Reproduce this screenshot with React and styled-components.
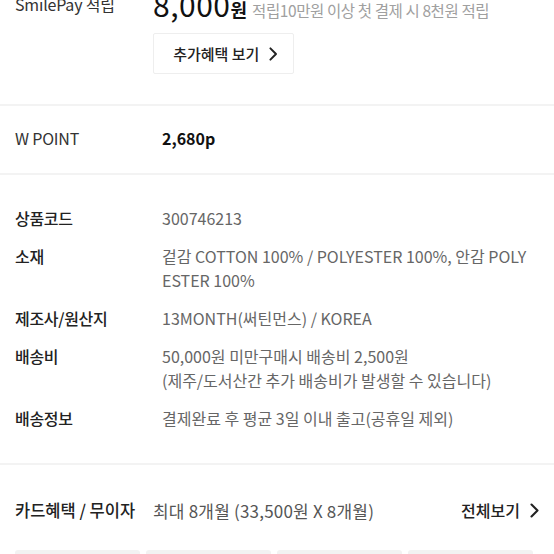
import styled, { createGlobalStyle } from 'styled-components'

const GlobalStyle = createGlobalStyle`
  html, body {
    margin: 0;
    padding: 0;
    background: #fff;
    overflow: hidden;
  }
  body {
    font-family: "Noto Sans CJK KR", "Noto Sans", sans-serif;
    color: #222;
    -webkit-font-smoothing: antialiased;
  }
  * {
    box-sizing: border-box;
  }
`

const infoRows = [
  { label: '상품코드', lines: ['300746213'] },
  { label: '소재', lines: ['겉감 COTTON 100% / POLYESTER 100%, 안감 POLY', 'ESTER 100%'] },
  { label: '제조사/원산지', lines: ['13MONTH(써틴먼스) / KOREA'] },
  { label: '배송비', lines: ['50,000원 미만구매시 배송비 2,500원', '(제주/도서산간 추가 배송비가 발생할 수 있습니다)'] },
  { label: '배송정보', lines: ['결제완료 후 평균 3일 이내 출고(공휴일 제외)'] }
]

function Chevron({ size = 14 }) {
  return (
    <svg width={size * 0.6} height={size} viewBox="0 0 6 10" fill="none">
      <path d="M1 1l4 4-4 4" stroke="#222" strokeWidth="1.4" strokeLinecap="round" strokeLinejoin="round" />
    </svg>
  )
}

function App() {
  return (
    <Page>
      <GlobalStyle />

      <Benefit>
        <Row>
          <Label>SmilePay 적립</Label>
          <Amount>
            <strong>8,000</strong><b>원</b>
            <span>적립10만원 이상 첫 결제 시 8천원 적립</span>
          </Amount>
        </Row>
        <MoreButton>
          추가혜택 보기
          <Chevron size={14} />
        </MoreButton>
      </Benefit>

      <Divider />

      <PointSection>
        <Label>W POINT</Label>
        <PointValue>2,680p</PointValue>
      </PointSection>

      <Divider />

      <InfoSection>
        {infoRows.map((row) => (
          <InfoRow key={row.label}>
            <InfoLabel>{row.label}</InfoLabel>
            <InfoValue>
              {row.lines.map((line) => <div key={line}>{line}</div>)}
            </InfoValue>
          </InfoRow>
        ))}
      </InfoSection>

      <Divider />

      <CardSection>
        <CardHeader>
          <CardLabel>카드혜택 / 무이자</CardLabel>
          <CardValue>최대 8개월 (33,500원 X 8개월)</CardValue>
          <ViewAll>
            전체보기
            <Chevron size={15} />
          </ViewAll>
        </CardHeader>
        <CardList>
          <CardBox />
          <CardBox />
          <CardBox />
          <CardBox />
        </CardList>
      </CardSection>
    </Page>
  )
}

const Page = styled.div`
  width: 554px;
  margin-top: -14px;
  display: flex;
  flex-direction: column;
`

const Benefit = styled.div`
  display: flex;
  flex-direction: column;
  padding: 0 15px 30px;
`

const Row = styled.div`
  display: flex;
  align-items: center;
  height: 36px;
`

const Label = styled.div`
  width: 138px;
  flex-shrink: 0;
  font-size: 16px;
  color: #333;
  letter-spacing: -0.2px;
`

const Amount = styled.div`
  display: flex;
  align-items: baseline;
  white-space: nowrap;

  strong {
    font-size: 30px;
    font-weight: 400;
    color: #111;
    letter-spacing: 0.5px;
  }

  b {
    font-size: 18px;
    font-weight: 700;
    color: #111;
    margin-right: 5px;
  }

  span {
    font-size: 15.5px;
    color: #a0a0a0;
    letter-spacing: -0.4px;
  }
`

const MoreButton = styled.button`
  margin: 11px 0 0 138px;
  width: 141px;
  height: 41px;
  display: flex;
  align-items: center;
  justify-content: center;
  gap: 10px;
  background: #fff;
  border: 1px solid #eeeeee;
  border-radius: 2px;
  font-family: inherit;
  font-size: 15px;
  font-weight: 500;
  color: #222;
  padding: 0 0 0 4px;
`

const Divider = styled.div`
  height: 2px;
  background: #f3f3f3;
`

const PointSection = styled.div`
  display: flex;
  align-items: center;
  height: 67px;
  padding: 0 15px 4px;
`

const PointValue = styled.div`
  margin-left: 9px;
  font-size: 16px;
  font-weight: 700;
  color: #111;
`

const InfoSection = styled.div`
  display: flex;
  flex-direction: column;
  gap: 14px;
  padding: 31px 15px 33px;
`

const InfoRow = styled.div`
  display: flex;
  line-height: 24px;
`

const InfoLabel = styled.div`
  width: 147px;
  flex-shrink: 0;
  font-size: 16px;
  font-weight: 500;
  color: #222;
  letter-spacing: -0.3px;
`

const InfoValue = styled.div`
  font-size: 16px;
  color: #666;
  letter-spacing: 0;
`

const CardSection = styled.div`
  display: flex;
  flex-direction: column;
  padding: 33px 0 0 15px;
`

const CardHeader = styled.div`
  display: flex;
  align-items: center;
  height: 24px;
  padding-right: 15px;
`

const CardLabel = styled.div`
  width: 138px;
  flex-shrink: 0;
  font-size: 16.5px;
  font-weight: 500;
  color: #222;
  letter-spacing: 0;
`

const CardValue = styled.div`
  flex: 1;
  font-size: 17px;
  color: #555;
  letter-spacing: 0.2px;
`

const ViewAll = styled.div`
  display: flex;
  align-items: center;
  gap: 10px;
  font-size: 16px;
  font-weight: 500;
  color: #222;
`

const CardList = styled.div`
  display: flex;
  gap: 6px;
  margin-top: 28px;
`

const CardBox = styled.div`
  width: 125px;
  height: 60px;
  flex-shrink: 0;
  background: #f2f2f2;
  border-radius: 3px;
`

export default App
